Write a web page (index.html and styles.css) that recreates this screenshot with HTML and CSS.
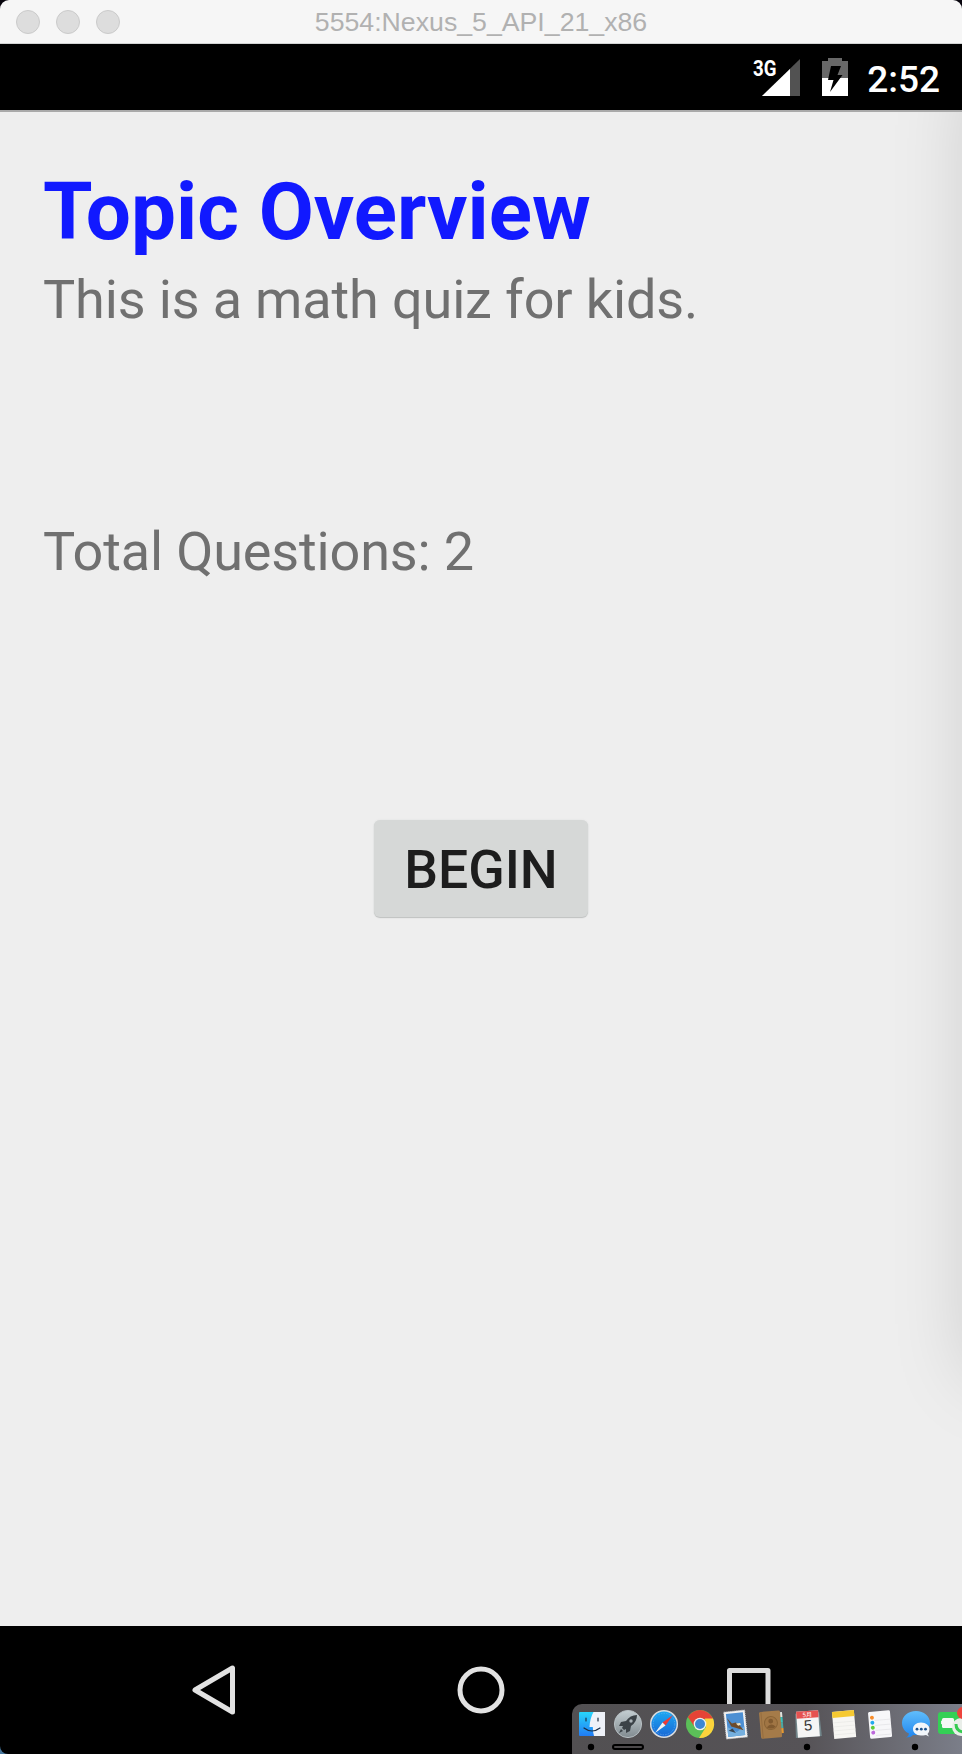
FILE: index.html
```
<!DOCTYPE html>
<html lang="en">
<head>
<meta charset="utf-8">
<title>5554:Nexus_5_API_21_x86</title>
<link rel="stylesheet" href="styles.css">
</head>
<body>
<div class="window">
  <header class="titlebar">
    <div class="lights"><span class="light"></span><span class="light"></span><span class="light"></span></div>
    <span class="caption">5554:Nexus_5_API_21_x86</span>
  </header>
  <div class="statusbar">
    <div class="network">
      <span class="network-type">3G</span>
      <svg class="signal" viewBox="0 0 38 37"><path d="M0 37 38 0V37Z" fill="#525252"/><path d="M0 37 28 10V37Z" fill="#fff"/></svg>
    </div>
    <svg class="battery" viewBox="0 0 26 38"><path d="M0 3H6V0H20V3H26V20H0Z" fill="#686868"/><path d="M0 20H26V38H0Z" fill="#fff"/><path d="M9 8H19L15.500 17H20.500L8 34 11.500 22H6Z" fill="#000"/></svg>
    <span class="clock">2:52</span>
  </div>
  <main class="screen">
    <h1 class="title">Topic Overview</h1>
    <p class="description">This is a math quiz for kids.</p>
    <p class="total">Total Questions: 2</p>
    <button class="begin">BEGIN</button>
  </main>
  <nav class="navbar">
    <svg class="nav-icon" viewBox="0 0 56 56"><path d="M9 28 46.500 6V50Z" fill="none" stroke="#e2e2e2" stroke-width="5" stroke-linejoin="round"/></svg>
    <svg class="nav-icon" viewBox="0 0 56 56"><circle cx="28" cy="28" r="21" fill="none" stroke="#e2e2e2" stroke-width="5"/></svg>
    <svg class="nav-icon" viewBox="0 0 56 56"><rect x="9.500" y="8.500" width="38.500" height="39" fill="none" stroke="#dcdcdc" stroke-width="5" stroke-linejoin="round"/></svg>
  </nav>
</div>
<div class="dock">
  <svg class="app" viewBox="0 0 36 50"><defs><linearGradient id="finder" x2="0" y2="1"><stop stop-color="#28d5fb"/><stop offset="1" stop-color="#207cf5"/></linearGradient></defs><rect x="5" y="8" width="26" height="24" rx="1" fill="url(#finder)"/><path d="M19.500 8H31V32H20Q18.800 28 18.800 23H15.500Q16 14 19.500 8Z" fill="#eef1f8"/><path d="M12 14V17M24 14V17M10 24Q18 30 26 24" fill="none" stroke="#1c2d42" stroke-width="1.200" stroke-linecap="round"/><circle cx="17" cy="43" r="3.200"/></svg>
  <svg class="app" viewBox="0 0 36 50"><defs><linearGradient id="launch" x2="0" y2="1"><stop stop-color="#c4ced2"/><stop offset="1" stop-color="#818b90"/></linearGradient></defs><circle cx="18" cy="20" r="13.600" fill="url(#launch)" stroke="#b6bec2"/><path d="M27 11Q20 11 16 17L11 18 9 22 13 22 12 24 14 26 16 25 16 29 20 27 21 22Q27 18 27 11ZM11 25 9 29 13 27Z" fill="#3b4247"/><circle cx="21" cy="17" r="1.700" fill="#abb4b8"/><rect x="3" y="41" width="30" height="4" rx="2" fill="#4c494b" stroke="#000" stroke-width="2"/></svg>
  <svg class="app" viewBox="0 0 36 50"><defs><linearGradient id="safari" x2="0" y2="1"><stop stop-color="#1da9f3"/><stop offset="1" stop-color="#1966d4"/></linearGradient></defs><circle cx="18" cy="20" r="13.300" fill="url(#safari)" stroke="#d7dadd" stroke-width="1.500"/><circle cx="18" cy="20" r="10.800" fill="none" stroke="#76bdf3" stroke-width="1" stroke-dasharray=".5 1.200"/><path d="M27 11 16.500 18.500 19.500 21.500Z" fill="#ee3a35"/><path d="M9 29 16.500 18.500 19.500 21.500Z" fill="#f1f1f1"/></svg>
  <svg class="app" viewBox="0 0 36 50"><circle cx="18" cy="20" r="14" fill="#5bbf58"/><path d="M5.900 13A14 14 0 0 1 30.100 13L31 15H18L12 22Z" fill="#e54336"/><path d="M31 14.500A14 14 0 0 1 17 34L24 23 23 14.500Z" fill="#fcd43c"/><circle cx="18" cy="20" r="6.300" fill="#f1f1ed"/><circle cx="18" cy="20" r="5" fill="#3c87d2"/><circle cx="17" cy="43" r="3.200"/></svg>
  <svg class="app" viewBox="0 0 36 50"><g transform="rotate(-6 18 20)"><circle cx="25" cy="29" r="6" fill="#4b5261"/><rect x="7" y="7" width="21" height="27" fill="#f2f2f2" stroke="#cfd1d4" stroke-width="1" stroke-dasharray="1 1"/><rect x="9" y="9" width="17" height="23" fill="#4c8fd3"/><path d="M9 22 18 28 26 23V32H9Z" fill="#74afdf"/><path d="M9.500 13 14 19 18 18.500 21 21 25 27 18 24 13 22Z" fill="#6d4b2c"/><path d="M18 19.500 22 19.500 23 21 20 22Z" fill="#efe3c1"/><path d="M10 26 14 24 17 29Z" fill="#3a4754"/></g></svg>
  <svg class="app" viewBox="0 0 36 50"><g transform="rotate(-5 18 20)"><path d="M26 9H29V14H26Z" fill="#dfe3df"/><path d="M26 14H29V19H26Z" fill="#3ac3be"/><path d="M26 19H29V25H26Z" fill="#4ba8a3"/><path d="M26 25H29V30H26Z" fill="#e79a31"/><rect x="6" y="7" width="21" height="27" rx="1.500" fill="#a57b49"/><path d="M8 7V34" stroke="#966d3f"/><circle cx="17" cy="19" r="6.500" fill="#a07544" stroke="#8a6436"/><circle cx="17" cy="17" r="2.400" fill="#805a30"/><path d="M12.500 23Q17 18 21.500 23Q17 26 12.500 23Z" fill="#805a30"/></g></svg>
  <svg class="app" viewBox="0 0 36 50"><g transform="rotate(-4 18 20)"><path d="M6 9H30L31 33H5Z" fill="#71858a"/><rect x="7" y="7" width="22" height="26" fill="#f5f5f5"/><rect x="7" y="7" width="22" height="7" fill="#e55250"/><text class="month" x="18" y="13">5月</text><text class="day" x="18" y="26.500">5</text></g><circle cx="17" cy="43" r="3.200"/></svg>
  <svg class="app" viewBox="0 0 36 50"><g transform="rotate(-5 18 20)"><rect x="7" y="7" width="22" height="27" fill="#f7f6f3"/><rect x="7" y="7" width="22" height="6" fill="#f6c931"/><path d="M7 18H29M7 22H29M7 26H29M7 30H29" stroke="#e7e6e3" stroke-width=".6"/></g></svg>
  <svg class="app" viewBox="0 0 36 50"><g transform="rotate(-5 18 20)"><rect x="7" y="7" width="22" height="27" rx="1.500" fill="#f7f7f9"/><path d="M13 16H29M13 21H29M13 26H29M13 31H29" stroke="#dfdfe2" stroke-width=".6"/><circle cx="10.500" cy="13" r="2" fill="#f78d2c"/><circle cx="10.500" cy="18" r="2" fill="#23a9ed"/><circle cx="10.500" cy="23" r="2" fill="#62cb38"/><circle cx="10.500" cy="28" r="2" fill="#bd69dc"/></g></svg>
  <svg class="app" viewBox="0 0 36 50"><defs><linearGradient id="chat" x2="0" y2="1"><stop stop-color="#60bdfb"/><stop offset="1" stop-color="#2086ef"/></linearGradient></defs><path d="M18 7C10 7 4 12 4 19C4 24 7 28 11 29.500Q11 32 8 33.500Q13 33.500 15 31H18C26 31 32 26 32 19S26 7 18 7Z" fill="url(#chat)"/><path d="M23 18.500C18 18.500 15 21.500 15 25S18 31.500 23 31.500Q25 31.500 28 31L31 32.500 29.500 30Q31.500 28 31.500 25C31.500 21.500 28 18.500 23 18.500Z" fill="#f2f6fa"/><g fill="#1d538d"><circle cx="19" cy="25.200" r="1.400"/><circle cx="23.300" cy="25.200" r="1.400"/><circle cx="27.500" cy="25.200" r="1.400"/></g><circle cx="17" cy="43" r="3.200"/></svg>
  <svg class="app" viewBox="0 0 36 50"><rect x="4" y="8" width="32" height="22" rx="3" fill="#34d055"/><path d="M7 17 10 15V21L7 20Z" fill="#e7f4e8"/><rect x="8" y="14" width="12" height="10" rx="1.500" fill="#f5f8f5"/><circle cx="27" cy="23" r="9" fill="#e9eee9"/><path d="M22 20Q22 27 29 28" fill="none" stroke="#35cb50" stroke-width="3"/><circle cx="29" cy="9" r="6" fill="#ed443d"/></svg>
</div>
</body>
</html>
```
FILE: styles.css
```
* { box-sizing: border-box; }
body {
  margin: 0;
  position: relative;
  width: 962px;
  height: 1754px;
  overflow: hidden;
  background: linear-gradient(#08050d 50%, #47769c 50%);
  font-family: Roboto, "Liberation Sans", sans-serif;
}
.window { display: flex; flex-direction: column; height: 1754px; }
.titlebar {
  display: grid;
  grid-template-columns: 1fr auto 1fr;
  height: 44px;
  padding: 0 16px;
  background: #f6f6f6;
  border-bottom: 1px solid #d2d4d4;
  border-radius: 9px 9px 0 0;
}
.lights { display: flex; gap: 16px; padding-top: 10px; }
.light {
  width: 24px;
  height: 24px;
  border: 1px solid #cbcbcb;
  border-radius: 50%;
  background: #dddddd;
}
.caption {
  color: #b1b1b1;
  font: 26.700px/45px "Liberation Sans", sans-serif;
  white-space: nowrap;
}
.statusbar {
  display: flex;
  justify-content: flex-end;
  height: 66px;
  padding: 14px 22px 0 0;
  background: #000;
  color: #fff;
}
.network { display: flex; margin-right: 22px; }
.network-type {
  width: 23px;
  margin-right: -14px;
  font-size: 22px;
  line-height: 22px;
  font-weight: 700;
  transform: scaleX(.85);
  transform-origin: 0 0;
}
.signal { width: 38px; height: 37px; margin-top: 1px; }
.battery { width: 26px; height: 38px; margin-right: 19px; }
.clock { font-size: 37px; font-weight: 500; line-height: 43px; }
.screen {
  display: flex;
  flex-direction: column;
  flex: 1;
  padding: 53px 43px 0;
  border-top: 2px solid #a9a9a9;
  background: #eeeeee;
  overflow: hidden;
  position: relative;
}
/* Shadow cast by the neighbouring window */
.screen::after {
  content: "";
  position: absolute;
  left: 970px;
  top: -40px;
  width: 100px;
  height: 1305px;
  box-shadow: 0 0 80px rgba(0, 0, 0, .15);
}
.title {
  margin: 0;
  color: #1119ff;
  font-size: 80px;
  font-weight: 700;
  line-height: 95px;
  white-space: nowrap;
}
.description, .total {
  margin: 0;
  color: #707070;
  font-size: 54px;
  letter-spacing: -.14px;
  line-height: 63px;
  white-space: nowrap;
}
.description { margin-top: 8px; }
.total { margin-top: 189px; }
.begin {
  align-self: center;
  width: 214px;
  height: 97px;
  margin-top: 237px;
  padding: 0;
  border: 0;
  border-radius: 6px;
  background: #d6d8d7;
  box-shadow: 0 1px 1px #bfc1c0, 0 0 2px #dedfdf;
  color: #1d1d1d;
  font: 500 53.500px/100px Roboto, sans-serif;
}
.navbar {
  display: flex;
  justify-content: center;
  gap: 211px;
  height: 128px;
  padding-top: 36px;
  border-bottom-left-radius: 8px;
  background: #000;
}
.nav-icon { width: 56px; height: 56px; flex: none; }
.dock {
  position: absolute;
  left: 572px;
  top: 1704px;
  display: flex;
  width: 390px;
  height: 50px;
  padding-left: 2px;
  overflow: hidden;
  border-radius: 10px 0 0 0;
  background: linear-gradient(90deg, #525052, #565357 60%, #7b7e89);
}
.app { width: 36px; height: 50px; flex: none; }
.month { fill: #fff; font: 6px "Noto Sans CJK SC", sans-serif; text-anchor: middle; }
.day { fill: #333; font: 15px "Liberation Sans", sans-serif; text-anchor: middle; }
```
